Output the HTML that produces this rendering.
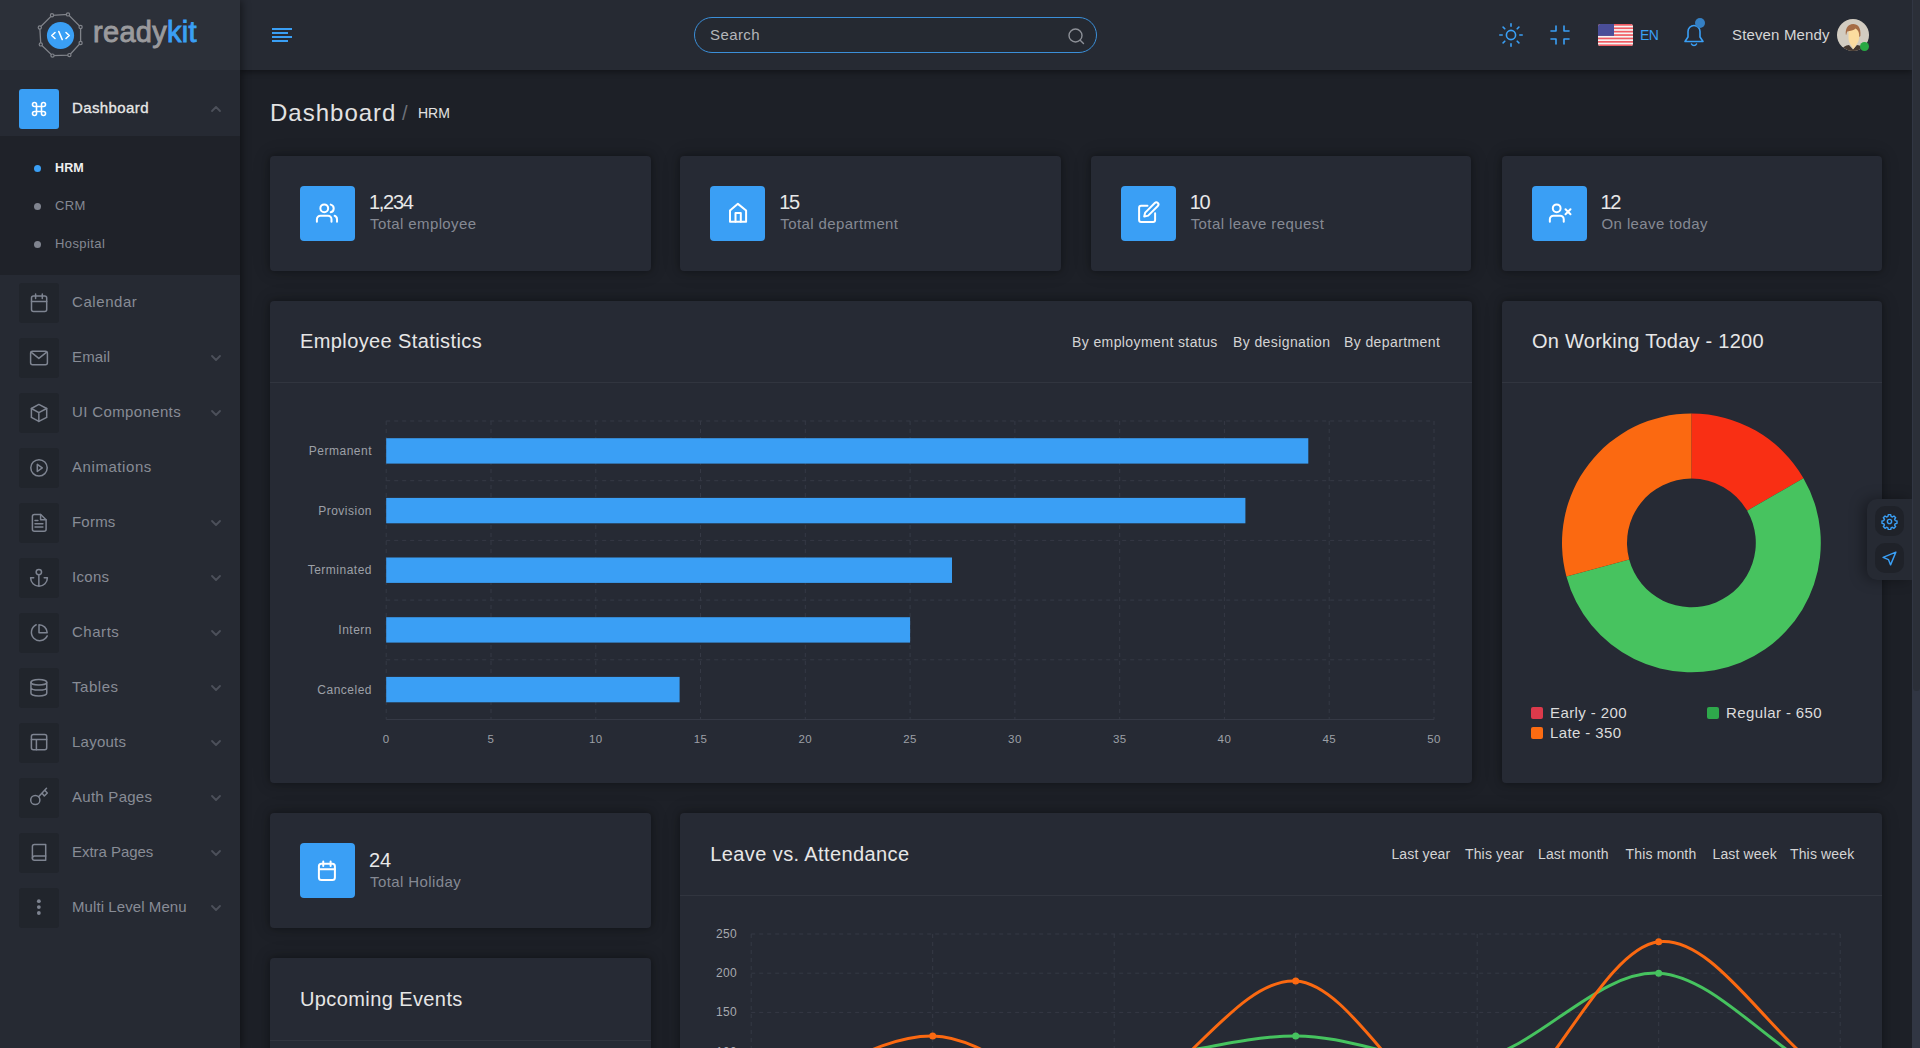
<!DOCTYPE html>
<html><head><meta charset="utf-8">
<style>
*{margin:0;padding:0;box-sizing:border-box}
html,body{width:1920px;height:1048px;overflow:hidden;background:#1d2027;font-family:"Liberation Sans",sans-serif;color:#e4e4e4;letter-spacing:0.4px}
.abs{position:absolute}
#sidebar{position:absolute;left:0;top:0;width:240px;height:1048px;background:#262a33;box-shadow:2px 0 8px rgba(0,0,0,0.45);z-index:2}
#logo{position:absolute;left:0;top:0;width:240px;height:70px;background:#2c3039}
#topbar{position:absolute;left:240px;top:0;width:1672px;height:70px;background:#262a33;box-shadow:0 2px 6px rgba(0,0,0,0.4);z-index:1}
#scroll{position:absolute;left:1912px;top:0;width:8px;height:1048px;background:#313643;z-index:3}
#thumb{position:absolute;left:0.5px;top:0;width:7px;height:691px;background:#2b2f38;border-radius:0 0 3.5px 3.5px}
.dash{position:absolute;left:0;top:70px;width:240px;height:66px;background:#262a33}
.sub{position:absolute;left:0;top:136px;width:240px;height:139px;background:#1f2229}
.ibox{position:absolute;left:19px;width:40px;height:40px;border-radius:3px;background:#21252c}
.ibox svg{position:absolute;left:10px;top:10px}
.mtxt{position:absolute;left:72px;font-size:15px;color:#888c96;line-height:18px;letter-spacing:0.45px}
.chev{position:absolute;left:210px}
.card{position:absolute;background:#262a34;border-radius:4px;box-shadow:0 0 7px 1px rgba(0,0,0,0.28),0 0 20px rgba(0,0,0,0.12)}
.sicon{position:absolute;left:30px;top:30px;width:55px;height:55px;background:#3a9ff5;border-radius:4px}
.snum{position:absolute;left:99px;top:35px;font-size:20px;color:#e8e8e8;line-height:22px;letter-spacing:-1.4px}
.slab{position:absolute;left:100px;top:59px;font-size:15px;color:#858993;line-height:18px}
.ctitle{position:absolute;left:30px;font-size:20px;color:#e6e6e6;line-height:24px}
.hline{position:absolute;left:0;right:0;height:1px;background:#31353f}
.tab{font-size:14px;color:#d4d4d4}
</style></head><body>
<div id="sidebar">

  <div id="logo">
    <svg class="abs" style="left:36px;top:11px" width="50" height="50" viewBox="36 11 50 50">
      <polygon points="52,15.3 68,14.4 80.6,27 80.6,43 69.4,55.1 52.5,55.6 40.8,44.4 39.8,27.5" fill="none" stroke="#80838a" stroke-width="1.3"/>
      <g fill="#2c3039" stroke="#80838a" stroke-width="1.2">
        <circle cx="52" cy="15.3" r="1.6"/><circle cx="68" cy="14.4" r="1.6"/><circle cx="80.6" cy="27" r="1.6"/><circle cx="80.6" cy="43" r="1.6"/>
        <circle cx="69.4" cy="55.1" r="1.6"/><circle cx="52.5" cy="55.6" r="1.6"/><circle cx="40.8" cy="44.4" r="1.6"/><circle cx="39.8" cy="27.5" r="1.6"/>
      </g>
      <circle cx="60.5" cy="35.5" r="13.6" fill="#3a9ff5"/>
      <path d="M55 32.5l-3.2 3 3.2 3M66 32.5l3.2 3-3.2 3M58.8 31.5l3.4 8" stroke="#fff" stroke-width="1.6" fill="none" stroke-linecap="round" stroke-linejoin="round"/>
    </svg>
    <div class="abs" style="left:93px;top:14px;font-size:29px;font-weight:normal;line-height:36px;color:#9a9a9d;letter-spacing:0.3px;-webkit-text-stroke:0.9px #9a9a9d">ready<span style="color:#3a9ff5;-webkit-text-stroke:0.9px #3a9ff5">kit</span></div>
  </div>
  <div class="dash">
    <div class="abs" style="left:19px;top:19px;width:40px;height:40px;background:#3a9ff5;border-radius:3px">
      <svg class="abs" style="left:10px;top:10px" width="20" height="20" viewBox="0 0 20 20" fill="none" stroke="#fff" stroke-width="1.6"><path d="M7.5 7.5h5v5h-5zM7.5 7.5V5.5a2 2 0 10-2 2zM12.5 7.5V5.5a2 2 0 112 2zM7.5 12.5v2a2 2 0 11-2-2zM12.5 12.5v2a2 2 0 102-2z"/></svg>
    </div>
    <div class="abs" style="left:72px;top:29px;font-size:15px;line-height:18px;color:#e8e8e8;-webkit-text-stroke:0.3px #e8e8e8">Dashboard</div>
    <svg class="abs" style="left:210px;top:35px" width="12" height="8" viewBox="0 0 12 8"><path d="M2 6l4-4 4 4" stroke="#4c505a" stroke-width="1.8" fill="none" stroke-linecap="round" stroke-linejoin="round"/></svg>
  </div>
  <div class="sub">
    <div class="abs" style="left:34px;top:29px;width:7px;height:7px;border-radius:50%;background:#3a9ff5"></div>
    <div class="abs" style="left:55px;top:25px;font-size:12.5px;line-height:15px;color:#f0f0f0;font-weight:bold;letter-spacing:0.1px">HRM</div>
    <div class="abs" style="left:34px;top:67px;width:7px;height:7px;border-radius:50%;background:#80848f"></div>
    <div class="abs" style="left:55px;top:62px;font-size:13px;line-height:15px;color:#858993">CRM</div>
    <div class="abs" style="left:34px;top:105px;width:7px;height:7px;border-radius:50%;background:#80848f"></div>
    <div class="abs" style="left:55px;top:100px;font-size:13px;line-height:15px;color:#858993">Hospital</div>
  </div>
<!--SBITEMS-->
<div class="ibox" style="top:283px"><svg class="abs" style="left:0;top:0" width="40" height="40" viewBox="0 0 40 40" stroke="#7e8491" stroke-width="1.5" fill="none" stroke-linecap="round" stroke-linejoin="round"><rect x="12.5" y="13" width="15.2" height="15.4" rx="2"/><path d="M12.5 18.5h15.2M16.6 11v4.6M23.3 11v4.6"/></svg></div>
<div class="mtxt" style="top:293px;letter-spacing:0.57px">Calendar</div>
<div class="ibox" style="top:338px"><svg class="abs" style="left:0;top:0" width="40" height="40" viewBox="0 0 40 40" stroke="#7e8491" stroke-width="1.5" fill="none" stroke-linecap="round" stroke-linejoin="round"><rect x="11.6" y="13.2" width="16.8" height="13.5" rx="2"/><path d="M12 14.2l7.85 6.2 7.85-6.2"/></svg></div>
<div class="mtxt" style="top:348px;letter-spacing:0.13px">Email</div>
<svg class="chev" style="top:354px" width="12" height="8" viewBox="0 0 12 8"><path d="M2 2l4 4 4-4" stroke="#4c505a" stroke-width="1.8" fill="none" stroke-linecap="round" stroke-linejoin="round"/></svg>
<div class="ibox" style="top:393px"><svg class="abs" style="left:0;top:0" width="40" height="40" viewBox="0 0 40 40" stroke="#7e8491" stroke-width="1.5" fill="none" stroke-linecap="round" stroke-linejoin="round"><path d="M19.85 11.45l7.85 4.05v8.9l-7.85 4.05-7.45-4.05v-8.9z"/><path d="M12.4 15.5l7.45 4.15 7.85-4.15M19.85 19.65v8.75"/></svg></div>
<div class="mtxt" style="top:403px;letter-spacing:0.37px">UI Components</div>
<svg class="chev" style="top:409px" width="12" height="8" viewBox="0 0 12 8"><path d="M2 2l4 4 4-4" stroke="#4c505a" stroke-width="1.8" fill="none" stroke-linecap="round" stroke-linejoin="round"/></svg>
<div class="ibox" style="top:448px"><svg class="abs" style="left:0;top:0" width="40" height="40" viewBox="0 0 40 40" stroke="#7e8491" stroke-width="1.5" fill="none" stroke-linecap="round" stroke-linejoin="round"><circle cx="20" cy="19.85" r="8.2"/><path d="M18.3 16.4v7.1l5-3.55z"/></svg></div>
<div class="mtxt" style="top:458px;letter-spacing:0.57px">Animations</div>
<div class="ibox" style="top:503px"><svg class="abs" style="left:0;top:0" width="40" height="40" viewBox="0 0 40 40" stroke="#7e8491" stroke-width="1.5" fill="none" stroke-linecap="round" stroke-linejoin="round"><path d="M15.4 11.45h6.3l5.4 5.3v9.5a2 2 0 01-2 2h-9.7a2 2 0 01-2-2v-12.8a2 2 0 012-2z"/><path d="M21.6 11.6v5.1h5.3M16 17.6h2.9M16 20.8h7.9M16 24h7.9"/></svg></div>
<div class="mtxt" style="top:513px;letter-spacing:0.21px">Forms</div>
<svg class="chev" style="top:519px" width="12" height="8" viewBox="0 0 12 8"><path d="M2 2l4 4 4-4" stroke="#4c505a" stroke-width="1.8" fill="none" stroke-linecap="round" stroke-linejoin="round"/></svg>
<div class="ibox" style="top:558px"><svg class="abs" style="left:0;top:0" width="40" height="40" viewBox="0 0 40 40" stroke="#7e8491" stroke-width="1.5" fill="none" stroke-linecap="round" stroke-linejoin="round"><circle cx="19.85" cy="14.1" r="2.7"/><path d="M19.85 16.8v11.4M11.6 19.85a8.3 8.3 0 0016.8 0M11.6 19.85h3.1M25.2 19.85h3.2"/></svg></div>
<div class="mtxt" style="top:568px;letter-spacing:0.29px">Icons</div>
<svg class="chev" style="top:574px" width="12" height="8" viewBox="0 0 12 8"><path d="M2 2l4 4 4-4" stroke="#4c505a" stroke-width="1.8" fill="none" stroke-linecap="round" stroke-linejoin="round"/></svg>
<div class="ibox" style="top:613px"><svg class="abs" style="left:0;top:0" width="40" height="40" viewBox="0 0 40 40" stroke="#7e8491" stroke-width="1.5" fill="none" stroke-linecap="round" stroke-linejoin="round"><path d="M17.2 11.8a8.3 8.3 0 1011 11.1"/><path d="M20 11.8v8.05h8.2A8.2 8.2 0 0020 11.8z"/></svg></div>
<div class="mtxt" style="top:623px;letter-spacing:0.53px">Charts</div>
<svg class="chev" style="top:629px" width="12" height="8" viewBox="0 0 12 8"><path d="M2 2l4 4 4-4" stroke="#4c505a" stroke-width="1.8" fill="none" stroke-linecap="round" stroke-linejoin="round"/></svg>
<div class="ibox" style="top:668px"><svg class="abs" style="left:0;top:0" width="40" height="40" viewBox="0 0 40 40" stroke="#7e8491" stroke-width="1.5" fill="none" stroke-linecap="round" stroke-linejoin="round"><ellipse cx="19.85" cy="14.3" rx="7.9" ry="2.8"/><path d="M11.95 14.3v11c0 1.5 3.5 2.7 7.9 2.7s7.9-1.2 7.9-2.7v-11M11.95 19.4c0 1.5 3.5 2.6 7.9 2.6s7.9-1.1 7.9-2.6"/></svg></div>
<div class="mtxt" style="top:678px;letter-spacing:0.55px">Tables</div>
<svg class="chev" style="top:684px" width="12" height="8" viewBox="0 0 12 8"><path d="M2 2l4 4 4-4" stroke="#4c505a" stroke-width="1.8" fill="none" stroke-linecap="round" stroke-linejoin="round"/></svg>
<div class="ibox" style="top:723px"><svg class="abs" style="left:0;top:0" width="40" height="40" viewBox="0 0 40 40" stroke="#7e8491" stroke-width="1.5" fill="none" stroke-linecap="round" stroke-linejoin="round"><rect x="12.4" y="11.45" width="15.3" height="15.25" rx="2"/><path d="M12.4 16.4h15.3M17.4 16.4v10.3"/></svg></div>
<div class="mtxt" style="top:733px;letter-spacing:0.24px">Layouts</div>
<svg class="chev" style="top:739px" width="12" height="8" viewBox="0 0 12 8"><path d="M2 2l4 4 4-4" stroke="#4c505a" stroke-width="1.8" fill="none" stroke-linecap="round" stroke-linejoin="round"/></svg>
<div class="ibox" style="top:778px"><svg class="abs" style="left:0;top:0" width="40" height="40" viewBox="0 0 40 40" stroke="#7e8491" stroke-width="1.5" fill="none" stroke-linecap="round" stroke-linejoin="round"><circle cx="16.3" cy="22" r="4.6"/><path d="M19.6 18.7l7.9-8.4M23.3 15.6l2 2.4 3-3-2.1-2.2"/></svg></div>
<div class="mtxt" style="top:788px;letter-spacing:0.27px">Auth Pages</div>
<svg class="chev" style="top:794px" width="12" height="8" viewBox="0 0 12 8"><path d="M2 2l4 4 4-4" stroke="#4c505a" stroke-width="1.8" fill="none" stroke-linecap="round" stroke-linejoin="round"/></svg>
<div class="ibox" style="top:833px"><svg class="abs" style="left:0;top:0" width="40" height="40" viewBox="0 0 40 40" stroke="#7e8491" stroke-width="1.5" fill="none" stroke-linecap="round" stroke-linejoin="round"><path d="M15.4 11.5h11.3v15.8H15.4a2 2 0 01-2-2V13.5a2 2 0 012-2z"/><path d="M13.4 25.2a2 2 0 012-2.1h11.3"/></svg></div>
<div class="mtxt" style="top:843px;letter-spacing:-0.04px">Extra Pages</div>
<svg class="chev" style="top:849px" width="12" height="8" viewBox="0 0 12 8"><path d="M2 2l4 4 4-4" stroke="#4c505a" stroke-width="1.8" fill="none" stroke-linecap="round" stroke-linejoin="round"/></svg>
<div class="ibox" style="top:888px"><svg class="abs" style="left:0;top:0" width="40" height="40" viewBox="0 0 40 40" stroke="#7e8491" stroke-width="1.5" fill="none" stroke-linecap="round" stroke-linejoin="round"><circle cx="19.85" cy="13.2" r="1.9" fill="#7e8491" stroke="none"/><circle cx="19.85" cy="19.1" r="1.9" fill="#7e8491" stroke="none"/><circle cx="19.85" cy="25" r="1.9" fill="#7e8491" stroke="none"/></svg></div>
<div class="mtxt" style="top:898px;letter-spacing:0.08px">Multi Level Menu</div>
<svg class="chev" style="top:904px" width="12" height="8" viewBox="0 0 12 8"><path d="M2 2l4 4 4-4" stroke="#4c505a" stroke-width="1.8" fill="none" stroke-linecap="round" stroke-linejoin="round"/></svg>
<!--/SBITEMS-->
</div>
<div id="topbar">
  <svg class="abs" style="left:32px;top:27px" width="22" height="16" viewBox="0 0 22 16"><g stroke="#3a9ff5" stroke-width="2.2"><path d="M0 2h20M0 6h16M0 10h20M0 14h16"/></g></svg>
  <div class="abs" style="left:454px;top:17px;width:403px;height:36px;border:1px solid #3b8fd9;border-radius:18px;background:#252931"></div>
  <div class="abs" style="left:470px;top:26px;font-size:15px;line-height:18px;color:#b4b6ba">Search</div>
  <svg class="abs" style="left:826px;top:26px" width="20" height="20" viewBox="0 0 20 20" fill="none" stroke="#8d9097" stroke-width="1.4" stroke-linecap="round"><circle cx="9.5" cy="9.5" r="6.5"/><path d="M14.2 14.2l3.3 3.3"/></svg>
  <svg class="abs" style="left:1259px;top:23px" width="24" height="24" viewBox="0 0 24 24" fill="none" stroke="#3a9ff5" stroke-width="1.6" stroke-linecap="round"><circle cx="12" cy="12" r="4.6"/><path d="M12 0.8v2.4M12 20.8v2.4M0.8 12h2.4M20.8 12h2.4M4.1 4.1l1.7 1.7M18.2 18.2l1.7 1.7M4.1 19.9l1.7-1.7M18.2 5.8l1.7-1.7"/></svg>
  <svg class="abs" style="left:1310px;top:25px" width="20" height="20" viewBox="0 0 20 20" fill="none" stroke="#3a9ff5" stroke-width="1.6" stroke-linecap="round" stroke-linejoin="round"><path d="M1 6h5V1M14 1v5h5M1 14h5v5M14 19v-5h5"/></svg>
  <svg class="abs" style="left:1358px;top:24px" width="35" height="22" viewBox="0 0 35 22"><defs><clipPath id="fc"><rect width="35" height="22" rx="2.5"/></clipPath></defs><g clip-path="url(#fc)"><rect width="35" height="22" fill="#f4f4f4"/><g fill="#f05b63"><rect y="0" width="35" height="1.7"/><rect y="3.4" width="35" height="1.7"/><rect y="6.8" width="35" height="1.7"/><rect y="10.2" width="35" height="1.7"/><rect y="13.6" width="35" height="1.7"/><rect y="17" width="35" height="1.7"/><rect y="20.4" width="35" height="1.7"/></g><rect width="16" height="11.9" fill="#4a4e99"/></g></svg>
  <div class="abs" style="left:1400px;top:27px;font-size:14px;line-height:16px;color:#3a9ff5;letter-spacing:-0.6px">EN</div>
  <svg class="abs" style="left:1443px;top:23px" width="22" height="24" viewBox="0 0 22 24" fill="none" stroke="#3a9ff5" stroke-width="1.6" stroke-linecap="round" stroke-linejoin="round"><path d="M11 2.5a6 6 0 00-6 6v5.5L2 18.5h18L17 14V8.5a6 6 0 00-6-6zM8.5 21a2.8 2.8 0 005 0"/></svg>
  <div class="abs" style="left:1455px;top:18px;width:10px;height:10px;border-radius:50%;background:#3580c4"></div>
  <div class="abs" style="left:1492px;top:26px;font-size:15px;line-height:18px;color:#d6d6d6;letter-spacing:0.15px">Steven Mendy</div>
  <svg class="abs" style="left:1597px;top:19px" width="32" height="32" viewBox="0 0 32 32"><defs><clipPath id="av"><circle cx="16" cy="16" r="16"/></clipPath></defs><g clip-path="url(#av)"><rect width="32" height="32" fill="#d2ccc1"/><path d="M3 34c1-5 5-7.5 9-8l4 4.5 4-4.5c4 .5 8 3 9 8z" fill="#45382f"/><path d="M11.5 12.5c0-3 2-4.5 5-4.5s5.5 1.5 5.5 4.5v6.5c0 3-1.5 5-2.5 6.5l-3 4.5-3-4.5c-1-1.5-2-3.5-2-6.5z" fill="#fcdc9f"/><path transform="translate(-1.3 0)" d="M10.3 16.5c-1.2-6 1.5-11.5 7.2-11.5 4.5 0 8 3.5 7.2 12l-1.2 1c.3-4-1-7-3.5-8.5-2 2-5.5 2.5-8.5 3z" fill="#a56c46"/></g></svg>
  <div class="abs" style="left:1619.8px;top:41.8px;width:9.2px;height:9.2px;border-radius:50%;background:#27a843"></div>
</div>
<!--CONTENT-->
<div class="abs" style="left:270px;top:99px;font-size:24px;line-height:28px;color:#e2e2e2;letter-spacing:1px">Dashboard</div>
<div class="abs" style="left:402px;top:102px;font-size:20px;line-height:22px;color:#6c7079">/</div>
<div class="abs" style="left:418px;top:105px;font-size:14px;line-height:16px;color:#e2e2e2;letter-spacing:0">HRM</div>
<div class="card" style="left:270px;top:156px;width:380.5px;height:115px">
<div class="sicon"><svg class="abs" style="left:0;top:0" width="55" height="55" viewBox="0 0 55 55" stroke="#fff" stroke-width="2" fill="none" stroke-linecap="round" stroke-linejoin="round"><circle cx="24.25" cy="22.3" r="3.9"/><path d="M16.9 35.7v-2.5a3.5 3.5 0 013.5-3.5h7.6a3.5 3.5 0 013.5 3.5v2.5M30.7 18.6a3.9 3.9 0 010 7.6M34.6 29.8a3.6 3.6 0 012.4 3.4v2.5"/></svg></div>
<div class="snum" style="letter-spacing:-1.3px;top:35px">1,234</div><div class="slab" style="top:59px">Total employee</div></div>
<div class="card" style="left:680.3px;top:156px;width:380.5px;height:115px">
<div class="sicon"><svg class="abs" style="left:0;top:0" width="55" height="55" viewBox="0 0 55 55" stroke="#fff" stroke-width="2" fill="none" stroke-linecap="round" stroke-linejoin="round"><path d="M20 35.7V24.5l7.9-6.65 8.2 6.65v11.2z"/><path d="M25.5 35.7v-8.6h5.3v8.6"/></svg></div>
<div class="snum" style="letter-spacing:-1.3px;top:35px">15</div><div class="slab" style="top:59px">Total department</div></div>
<div class="card" style="left:1090.7px;top:156px;width:380.5px;height:115px">
<div class="sicon"><svg class="abs" style="left:0;top:0" width="55" height="55" viewBox="0 0 55 55" stroke="#fff" stroke-width="2" fill="none" stroke-linecap="round" stroke-linejoin="round"><path d="M26.5 19.7h-6.4a2 2 0 00-2 2v12.3a2 2 0 002 2h12a2 2 0 002-2v-6.7"/><path d="M23.2 30.6l1-4 9.6-9.6a2.1 2.1 0 013 3l-9.6 9.6z"/></svg></div>
<div class="snum" style="letter-spacing:-1.3px;top:35px">10</div><div class="slab" style="top:59px">Total leave request</div></div>
<div class="card" style="left:1501.5px;top:156px;width:380px;height:115px">
<div class="sicon"><svg class="abs" style="left:0;top:0" width="55" height="55" viewBox="0 0 55 55" stroke="#fff" stroke-width="2" fill="none" stroke-linecap="round" stroke-linejoin="round"><circle cx="24.7" cy="22.3" r="3.9"/><path d="M17.85 35.7v-2.5a3.5 3.5 0 013.5-3.5h6.9a3.5 3.5 0 013.5 3.5v2.5M33.5 23.2l5 5M38.5 23.2l-5 5"/></svg></div>
<div class="snum" style="letter-spacing:-1.3px;top:35px">12</div><div class="slab" style="top:59px">On leave today</div></div>
<div class="card" style="left:270px;top:301px;width:1202px;height:482px">
<div class="ctitle" style="top:28px">Employee Statistics</div>
<div class="abs tab" style="left:802px;top:33px">By employment status</div>
<div class="abs tab" style="left:963px;top:33px">By designation</div>
<div class="abs tab" style="left:1074px;top:33px">By department</div>
<div class="hline" style="top:81px"></div>
<svg class="abs" style="left:0;top:0" width="1202" height="482" font-family="Liberation Sans, sans-serif"><line x1="116.2" y1="120" x2="116.2" y2="418.5" stroke="#353945" stroke-dasharray="4 4"/><line x1="221.0" y1="120" x2="221.0" y2="418.5" stroke="#353945" stroke-dasharray="4 4"/><line x1="325.8" y1="120" x2="325.8" y2="418.5" stroke="#353945" stroke-dasharray="4 4"/><line x1="430.5" y1="120" x2="430.5" y2="418.5" stroke="#353945" stroke-dasharray="4 4"/><line x1="535.3" y1="120" x2="535.3" y2="418.5" stroke="#353945" stroke-dasharray="4 4"/><line x1="640.1" y1="120" x2="640.1" y2="418.5" stroke="#353945" stroke-dasharray="4 4"/><line x1="744.9" y1="120" x2="744.9" y2="418.5" stroke="#353945" stroke-dasharray="4 4"/><line x1="849.7" y1="120" x2="849.7" y2="418.5" stroke="#353945" stroke-dasharray="4 4"/><line x1="954.4" y1="120" x2="954.4" y2="418.5" stroke="#353945" stroke-dasharray="4 4"/><line x1="1059.2" y1="120" x2="1059.2" y2="418.5" stroke="#353945" stroke-dasharray="4 4"/><line x1="1164.0" y1="120" x2="1164.0" y2="418.5" stroke="#353945" stroke-dasharray="4 4"/><line x1="116.19999999999999" y1="120.0" x2="1164" y2="120.0" stroke="#353945" stroke-dasharray="4 4"/><line x1="116.19999999999999" y1="179.7" x2="1164" y2="179.7" stroke="#353945" stroke-dasharray="4 4"/><line x1="116.19999999999999" y1="239.4" x2="1164" y2="239.4" stroke="#353945" stroke-dasharray="4 4"/><line x1="116.19999999999999" y1="299.1" x2="1164" y2="299.1" stroke="#353945" stroke-dasharray="4 4"/><line x1="116.19999999999999" y1="358.8" x2="1164" y2="358.8" stroke="#353945" stroke-dasharray="4 4"/><line x1="116.19999999999999" y1="418.5" x2="1164" y2="418.5" stroke="#353945"/><rect x="116.19999999999999" y="137.2" width="922.1" height="25.4" fill="#3a9ff5"/><text x="102" y="153.9" text-anchor="end" font-size="12" fill="#9da0a7" letter-spacing="0.5">Permanent</text><rect x="116.19999999999999" y="196.9" width="859.2" height="25.4" fill="#3a9ff5"/><text x="102" y="213.5" text-anchor="end" font-size="12" fill="#9da0a7" letter-spacing="0.5">Provision</text><rect x="116.19999999999999" y="256.5" width="565.8" height="25.4" fill="#3a9ff5"/><text x="102" y="273.2" text-anchor="end" font-size="12" fill="#9da0a7" letter-spacing="0.5">Terminated</text><rect x="116.19999999999999" y="316.2" width="523.9" height="25.4" fill="#3a9ff5"/><text x="102" y="333.0" text-anchor="end" font-size="12" fill="#9da0a7" letter-spacing="0.5">Intern</text><rect x="116.19999999999999" y="375.9" width="293.4" height="25.4" fill="#3a9ff5"/><text x="102" y="392.6" text-anchor="end" font-size="12" fill="#9da0a7" letter-spacing="0.5">Canceled</text><text x="116.2" y="442" text-anchor="middle" font-size="11.5" fill="#9da0a7">0</text><text x="221.0" y="442" text-anchor="middle" font-size="11.5" fill="#9da0a7">5</text><text x="325.8" y="442" text-anchor="middle" font-size="11.5" fill="#9da0a7">10</text><text x="430.5" y="442" text-anchor="middle" font-size="11.5" fill="#9da0a7">15</text><text x="535.3" y="442" text-anchor="middle" font-size="11.5" fill="#9da0a7">20</text><text x="640.1" y="442" text-anchor="middle" font-size="11.5" fill="#9da0a7">25</text><text x="744.9" y="442" text-anchor="middle" font-size="11.5" fill="#9da0a7">30</text><text x="849.7" y="442" text-anchor="middle" font-size="11.5" fill="#9da0a7">35</text><text x="954.4" y="442" text-anchor="middle" font-size="11.5" fill="#9da0a7">40</text><text x="1059.2" y="442" text-anchor="middle" font-size="11.5" fill="#9da0a7">45</text><text x="1164.0" y="442" text-anchor="middle" font-size="11.5" fill="#9da0a7">50</text></svg>
</div>
<div class="card" style="left:1502px;top:301px;width:380px;height:482px">
<div class="ctitle" style="top:28px;letter-spacing:0.25px">On Working Today - 1200</div>
<div class="hline" style="top:81px"></div>
<svg class="abs" style="left:0;top:0" width="380" height="482"><path d="M189.40 112.50A129.4 129.4 0 0 1 301.46 177.20L245.17 209.70A64.4 64.4 0 0 0 189.40 177.50Z" fill="#f92f14"/><path d="M301.46 177.20A129.4 129.4 0 1 1 64.41 275.39L127.19 258.57A64.4 64.4 0 1 0 245.17 209.70Z" fill="#47c35f"/><path d="M64.41 275.39A129.4 129.4 0 0 1 189.40 112.50L189.40 177.50A64.4 64.4 0 0 0 127.19 258.57Z" fill="#fb6911"/></svg>
<div class="abs" style="left:29px;top:405.70000000000005px;width:12px;height:12px;border-radius:2px;background:#dc3a4b"></div>
<div class="abs" style="left:48px;top:402.70000000000005px;font-size:15px;line-height:18px;color:#dcdcdc">Early - 200</div>
<div class="abs" style="left:205px;top:405.70000000000005px;width:12px;height:12px;border-radius:2px;background:#2ea84b"></div>
<div class="abs" style="left:224px;top:402.70000000000005px;font-size:15px;line-height:18px;color:#dcdcdc">Regular - 650</div>
<div class="abs" style="left:29px;top:425.6px;width:12px;height:12px;border-radius:2px;background:#fb6b12"></div>
<div class="abs" style="left:48px;top:422.6px;font-size:15px;line-height:18px;color:#dcdcdc">Late - 350</div>
</div>
<div class="card" style="left:270px;top:813px;width:380.5px;height:115px">
<div class="sicon"><svg class="abs" style="left:0;top:0" width="55" height="55" viewBox="0 0 55 55" stroke="#fff" stroke-width="2" fill="none" stroke-linecap="round" stroke-linejoin="round"><rect x="18.9" y="20.7" width="16" height="16.3" rx="2.5"/><path d="M18.9 26.2h16M23.25 18.6v4.5M30.6 18.6v4.5"/></svg></div>
<div class="snum" style="letter-spacing:0px;top:36px">24</div><div class="slab" style="top:60px">Total Holiday</div></div>
<div class="card" style="left:270px;top:958px;width:380.5px;height:200px">
<div class="ctitle" style="top:29px">Upcoming Events</div>
<div class="hline" style="top:82px"></div>
</div>
<div class="card" style="left:680.3px;top:813px;width:1201.7px;height:400px">
<div class="ctitle" style="top:29px">Leave vs. Attendance</div>
<div class="abs tab" style="left:711.1px;top:33px;letter-spacing:0.15px">Last year</div>
<div class="abs tab" style="left:784.7px;top:33px;letter-spacing:0.15px">This year</div>
<div class="abs tab" style="left:857.7px;top:33px;letter-spacing:0.15px">Last month</div>
<div class="abs tab" style="left:945.3px;top:33px;letter-spacing:0.15px">This month</div>
<div class="abs tab" style="left:1032.2px;top:33px;letter-spacing:0.15px">Last week</div>
<div class="abs tab" style="left:1109.7px;top:33px;letter-spacing:0.15px">This week</div>
<div class="hline" style="top:82px"></div>
<svg class="abs" style="left:0;top:0" width="1202" height="400" font-family="Liberation Sans, sans-serif"><line x1="71.2" y1="121.0" x2="1160.2" y2="121.0" stroke="#353945" stroke-dasharray="4 4"/><text x="57.2" y="125.0" text-anchor="end" font-size="12" fill="#a6a9af">250</text><line x1="71.2" y1="160.2" x2="1160.2" y2="160.2" stroke="#353945" stroke-dasharray="4 4"/><text x="57.2" y="164.2" text-anchor="end" font-size="12" fill="#a6a9af">200</text><line x1="71.2" y1="199.4" x2="1160.2" y2="199.4" stroke="#353945" stroke-dasharray="4 4"/><text x="57.2" y="203.4" text-anchor="end" font-size="12" fill="#a6a9af">150</text><line x1="71.2" y1="238.6" x2="1160.2" y2="238.6" stroke="#353945" stroke-dasharray="4 4"/><text x="57.2" y="242.6" text-anchor="end" font-size="12" fill="#a6a9af">100</text><line x1="71.2" y1="277.8" x2="1160.2" y2="277.8" stroke="#353945" stroke-dasharray="4 4"/><text x="57.2" y="281.8" text-anchor="end" font-size="12" fill="#a6a9af">50</text><line x1="71.2" y1="317.0" x2="1160.2" y2="317.0" stroke="#353945" stroke-dasharray="4 4"/><text x="57.2" y="321.0" text-anchor="end" font-size="12" fill="#a6a9af">0</text><line x1="71.2" y1="121.0" x2="71.2" y2="317.0" stroke="#353945" stroke-dasharray="4 4"/><line x1="252.7" y1="121.0" x2="252.7" y2="317.0" stroke="#353945" stroke-dasharray="4 4"/><line x1="434.2" y1="121.0" x2="434.2" y2="317.0" stroke="#353945" stroke-dasharray="4 4"/><line x1="615.7" y1="121.0" x2="615.7" y2="317.0" stroke="#353945" stroke-dasharray="4 4"/><line x1="797.2" y1="121.0" x2="797.2" y2="317.0" stroke="#353945" stroke-dasharray="4 4"/><line x1="978.7" y1="121.0" x2="978.7" y2="317.0" stroke="#353945" stroke-dasharray="4 4"/><line x1="1160.2" y1="121.0" x2="1160.2" y2="317.0" stroke="#353945" stroke-dasharray="4 4"/><path d="M71.20 277.80C131.70 271.27 192.20 243.57 252.70 238.60C313.20 233.63 373.70 250.62 434.20 248.01C494.70 245.39 555.20 223.18 615.70 222.92C676.20 222.66 736.70 256.89 797.20 246.44C857.70 235.99 918.20 156.93 978.70 160.20C1039.20 163.47 1099.70 248.40 1160.20 266.04" fill="none" stroke="#46c35f" stroke-width="3"/><circle cx="71.20" cy="277.80" r="3.5" fill="#46c35f"/><circle cx="252.70" cy="238.60" r="3.5" fill="#46c35f"/><circle cx="434.20" cy="248.01" r="3.5" fill="#46c35f"/><circle cx="615.70" cy="222.92" r="3.5" fill="#46c35f"/><circle cx="797.20" cy="246.44" r="3.5" fill="#46c35f"/><circle cx="978.70" cy="160.20" r="3.5" fill="#46c35f"/><circle cx="1160.20" cy="266.04" r="3.5" fill="#46c35f"/><path d="M71.20 285.64C131.70 275.19 192.20 222.27 252.70 222.92C313.20 223.57 373.70 298.71 434.20 289.56C494.70 280.41 555.20 164.77 615.70 168.04C676.20 171.31 736.70 315.69 797.20 309.16C857.70 302.63 918.20 136.03 978.70 128.84C1039.20 121.65 1099.70 243.17 1160.20 266.04" fill="none" stroke="#fb6911" stroke-width="3"/><circle cx="71.20" cy="285.64" r="3.5" fill="#fb6911"/><circle cx="252.70" cy="222.92" r="3.5" fill="#fb6911"/><circle cx="434.20" cy="289.56" r="3.5" fill="#fb6911"/><circle cx="615.70" cy="168.04" r="3.5" fill="#fb6911"/><circle cx="797.20" cy="309.16" r="3.5" fill="#fb6911"/><circle cx="978.70" cy="128.84" r="3.5" fill="#fb6911"/><circle cx="1160.20" cy="266.04" r="3.5" fill="#fb6911"/></svg>
</div>
<div class="abs" style="left:1867px;top:499px;width:45px;height:81px;background:#262a33;border-radius:10px 0 0 10px;box-shadow:-4px 0 14px rgba(0,0,0,0.35)">
<div class="abs" style="left:8px;top:7px;width:29px;height:30px;border-radius:10px;background:#1f2229"><svg class="abs" style="left:6px;top:7px" width="17" height="17" viewBox="0 0 24 24" fill="none" stroke="#3a9ff5" stroke-width="2" stroke-linejoin="round"><path d="M10.3 2.3h3.4l.5 2.6 1.9.8 2.2-1.5 2.4 2.4-1.5 2.2.8 1.9 2.6.5v3.4l-2.6.5-.8 1.9 1.5 2.2-2.4 2.4-2.2-1.5-1.9.8-.5 2.6h-3.4l-.5-2.6-1.9-.8-2.2 1.5-2.4-2.4 1.5-2.2-.8-1.9-2.6-.5v-3.4l2.6-.5.8-1.9-1.5-2.2 2.4-2.4 2.2 1.5 1.9-.8z"/><circle cx="12" cy="12" r="3"/></svg></div>
<div class="abs" style="left:8px;top:44px;width:29px;height:30px;border-radius:10px;background:#1f2229"><svg class="abs" style="left:6px;top:7px" width="17" height="17" viewBox="0 0 24 24" fill="none" stroke="#3a9ff5" stroke-width="2" stroke-linejoin="round"><path d="M21 3L3 10.5l7.5 3 3 7.5z"/></svg></div>
</div>

<!--/CONTENT-->
<div id="scroll"><div id="thumb"></div></div>
</body></html>
